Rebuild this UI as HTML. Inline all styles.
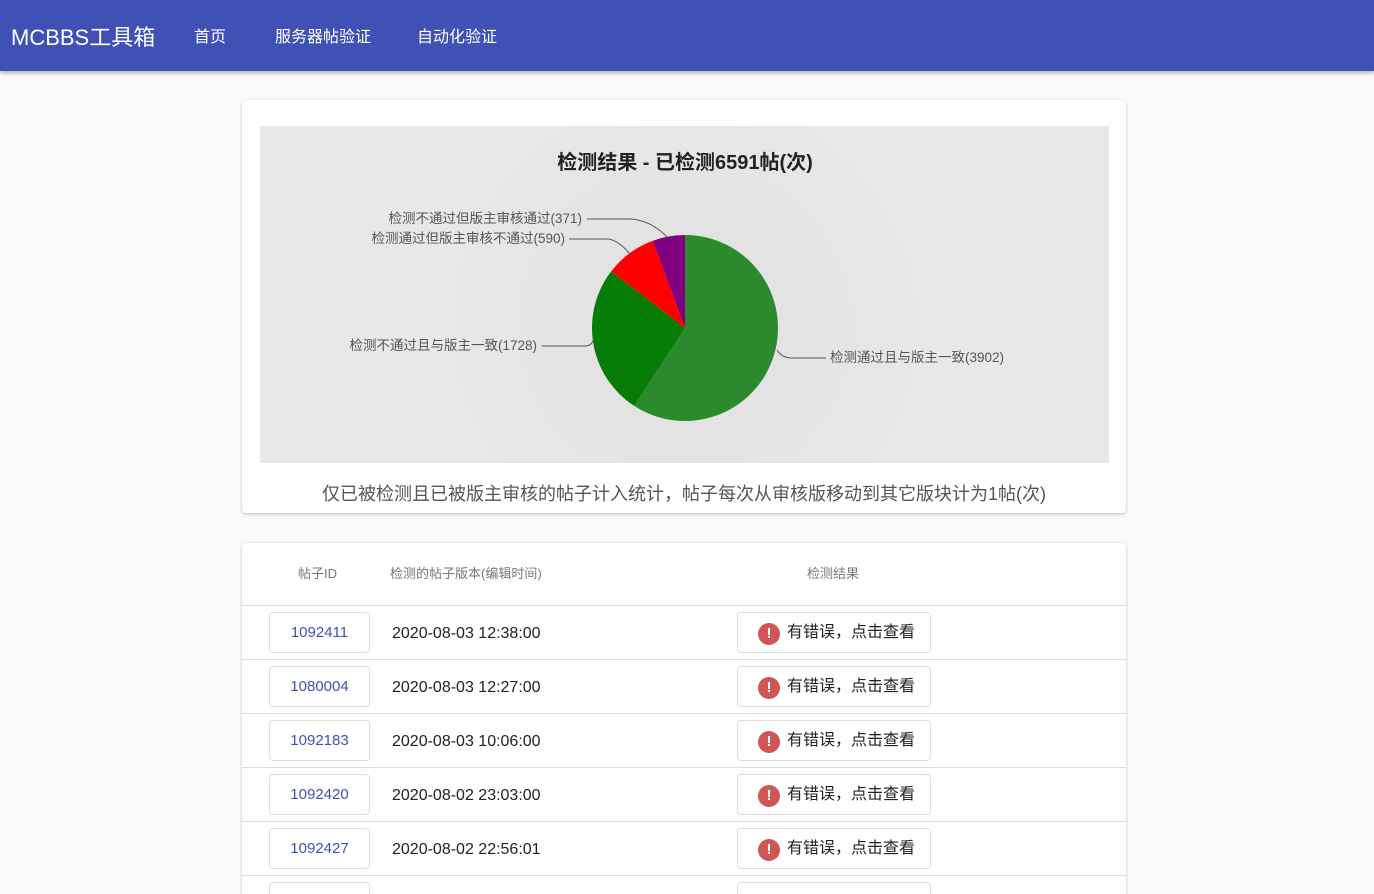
<!DOCTYPE html>
<html><head><meta charset="utf-8">
<style>
*{box-sizing:border-box;margin:0;padding:0}
html,body{width:1374px;height:894px;overflow:hidden}
body{background:#fafafa;font-family:"Liberation Sans","Noto Sans CJK SC",sans-serif;position:relative}
.nav{position:absolute;left:0;top:0;width:1374px;height:71px;background:#3f51b5;box-shadow:0 2px 4px rgba(0,0,0,.3);color:#fff}
.nav .logo{position:absolute;left:11px;top:20px;font-size:22px}
.nav a{position:absolute;top:23px;font-size:16px;color:#fff}
.card{position:absolute;left:242px;width:884px;background:#fff;border-radius:4px;box-shadow:0 1px 3px rgba(0,0,0,.25);overflow:hidden}
.chart{position:absolute;left:18px;top:26px;width:849px;height:337px;background:radial-gradient(circle at 425px 200px,#dedede 0,#e3e3e3 100px,#e8e8e8 250px)}
.note{position:absolute;top:380px;left:0;width:884px;text-align:center;font-size:18px;color:#555}
.th{position:absolute;top:20px;font-size:13px;color:#777}
.row{position:absolute;left:0;width:884px;height:54px;border-top:1px solid #ddd}
.id{position:absolute;left:27px;top:6px;width:101px;height:41px;border:1px solid #ddd;border-radius:4px;text-align:center;line-height:39px;color:#3f51b5;font-size:15px}
.dt{position:absolute;left:150px;top:19px;font-size:16px;color:#222}
.btn{position:absolute;left:495px;top:6px;width:194px;height:41px;border:1px solid #ddd;border-radius:4px;font-size:16px;color:#222;line-height:39px;padding-left:49px}
.btn i{position:absolute;left:20px;top:10px;width:22px;height:22px;border-radius:50%;background:#d05555;color:#fff;font-style:normal;font-weight:bold;font-size:15px;line-height:22px;text-align:center}
</style></head><body>
<div class="nav"><div class="logo">MCBBS工具箱</div><a style="left:194px">首页</a><a style="left:275px">服务器帖验证</a><a style="left:417px">自动化验证</a></div>
<div class="card" style="top:100px;height:413px">
<div class="chart">
<svg width="849" height="337" style="position:absolute;left:0;top:0" font-family="Liberation Sans,Noto Sans CJK SC,sans-serif">
<g transform="translate(-260,-126)">
<text x="685" y="169" text-anchor="middle" font-size="20" font-weight="bold" fill="#222">检测结果 - 已检测6591帖(次)</text>
<path d="M685 328 L685 235 A93 93 0 1 1 634.2 405.9 Z" fill="#2b8a2b"/>
<path d="M685 328 L634.2 405.9 A93 93 0 0 1 611.2 271.4 Z" fill="#067b06"/>
<path d="M685 328 L611.2 271.4 A93 93 0 0 1 652.9 240.7 Z" fill="#ff0000"/>
<path d="M685 328 L652.9 240.7 A93 93 0 0 1 685 235 Z" fill="#800080"/>
<g fill="none" stroke="#555" stroke-width="1">
<path d="M587 219 L628 219 Q650 219 668 238"/>
<path d="M569 239 L608 239 Q618 240 630 254"/>
<path d="M542 346 L585 346 Q592 346 594 338"/>
<path d="M777 350 Q782 358 792 358 L826 358"/>
</g>
<g font-size="13.5" fill="#555">
<text x="582" y="223" text-anchor="end">检测不通过但版主审核通过(371)</text>
<text x="565" y="243" text-anchor="end">检测通过但版主审核不通过(590)</text>
<text x="537" y="350" text-anchor="end">检测不通过且与版主一致(1728)</text>
<text x="830" y="362">检测通过且与版主一致(3902)</text>
</g></g></svg>
</div>
<div class="note">仅已被检测且已被版主审核的帖子计入统计，帖子每次从审核版移动到其它版块计为1帖(次)</div>
</div>
<div class="card" style="top:543px;height:351px;border-radius:4px 4px 0 0">
<div class="th" style="left:56px">帖子ID</div>
<div class="th" style="left:148px">检测的帖子版本(编辑时间)</div>
<div class="th" style="left:565px">检测结果</div>
<div class="row" style="top:62px"><div class="id">1092411</div><div class="dt">2020-08-03 12:38:00</div><div class="btn"><i>!</i>有错误，点击查看</div></div>
<div class="row" style="top:116px"><div class="id">1080004</div><div class="dt">2020-08-03 12:27:00</div><div class="btn"><i>!</i>有错误，点击查看</div></div>
<div class="row" style="top:170px"><div class="id">1092183</div><div class="dt">2020-08-03 10:06:00</div><div class="btn"><i>!</i>有错误，点击查看</div></div>
<div class="row" style="top:224px"><div class="id">1092420</div><div class="dt">2020-08-02 23:03:00</div><div class="btn"><i>!</i>有错误，点击查看</div></div>
<div class="row" style="top:278px"><div class="id">1092427</div><div class="dt">2020-08-02 22:56:01</div><div class="btn"><i>!</i>有错误，点击查看</div></div>
<div class="row" style="top:332px"><div class="id"></div><div class="btn" style="padding:0"></div></div>
</div>
</body></html>
